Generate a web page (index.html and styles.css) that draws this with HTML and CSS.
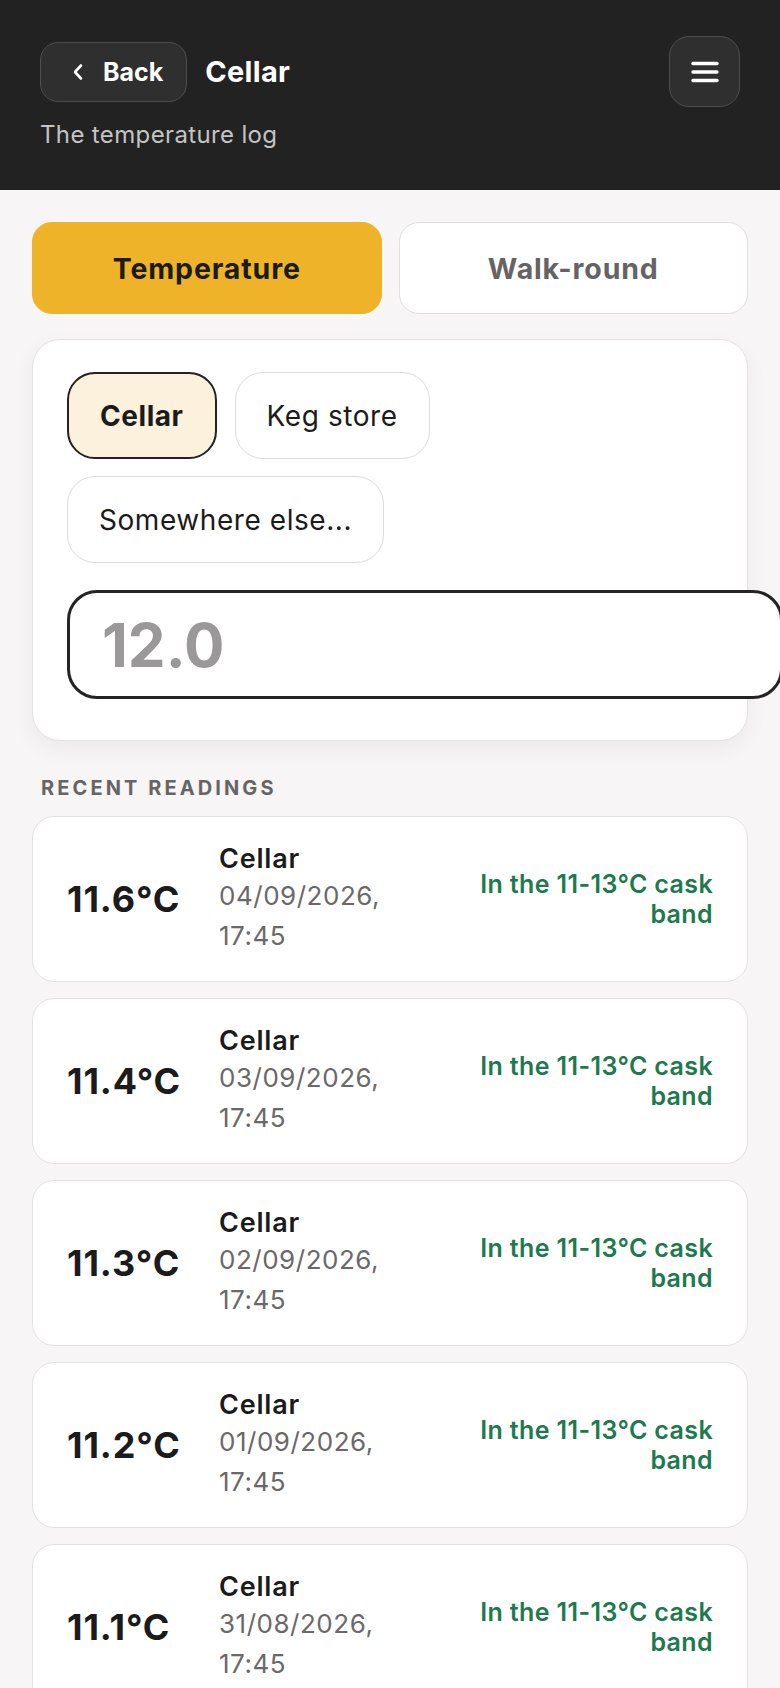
FILE: index.html
```html
<!DOCTYPE html>
<html lang="en">
<head>
<meta charset="utf-8">
<title>Cellar</title>
<link rel="stylesheet" href="styles.css">
</head>
<body>
<header class="topbar">
  <div class="topbar-row">
    <div class="topbar-left">
      <button class="back-btn" type="button">
        <svg class="chev" width="12" height="18" viewBox="0 0 12 18" aria-hidden="true"><path d="M9 2.5 L3 9 L9 15.5" fill="none" stroke="#fff" stroke-width="2.6" stroke-linecap="round" stroke-linejoin="round"/></svg>
        <span>Back</span>
      </button>
      <h1 class="title">Cellar</h1>
    </div>
    <button class="menu-btn" type="button" aria-label="Menu">
      <svg width="28" height="22" viewBox="0 0 28 22" aria-hidden="true"><g stroke="#fff" stroke-width="3.4" stroke-linecap="round"><line x1="2" y1="2.5" x2="26" y2="2.5"/><line x1="2" y1="11" x2="26" y2="11"/><line x1="2" y1="19.5" x2="26" y2="19.5"/></g></svg>
    </button>
  </div>
  <p class="subtitle">The temperature log</p>
</header>

<main class="content">
  <div class="tabs">
    <button class="tab tab-active" type="button">Temperature</button>
    <button class="tab" type="button">Walk-round</button>
  </div>

  <section class="entry-card">
    <div class="chips">
      <button class="chip chip-selected" type="button">Cellar</button>
      <button class="chip" type="button">Keg store</button>
      <button class="chip" type="button">Somewhere else...</button>
    </div>
    <input class="temp-input" type="text" placeholder="12.0">
  </section>

  <h2 class="section-label">Recent readings</h2>

  <ul class="readings">
    <li class="reading">
      <div class="reading-temp">11.6°C</div>
      <div class="reading-info"><div class="reading-place">Cellar</div><div class="reading-date">04/09/2026, 17:45</div></div>
      <div class="reading-status">In the 11-13°C cask band</div>
    </li>
    <li class="reading">
      <div class="reading-temp">11.4°C</div>
      <div class="reading-info"><div class="reading-place">Cellar</div><div class="reading-date">03/09/2026, 17:45</div></div>
      <div class="reading-status">In the 11-13°C cask band</div>
    </li>
    <li class="reading">
      <div class="reading-temp">11.3°C</div>
      <div class="reading-info"><div class="reading-place">Cellar</div><div class="reading-date">02/09/2026, 17:45</div></div>
      <div class="reading-status">In the 11-13°C cask band</div>
    </li>
    <li class="reading">
      <div class="reading-temp">11.2°C</div>
      <div class="reading-info"><div class="reading-place">Cellar</div><div class="reading-date">01/09/2026, 17:45</div></div>
      <div class="reading-status">In the 11-13°C cask band</div>
    </li>
    <li class="reading">
      <div class="reading-temp">11.1°C</div>
      <div class="reading-info"><div class="reading-place">Cellar</div><div class="reading-date">31/08/2026, 17:45</div></div>
      <div class="reading-status">In the 11-13°C cask band</div>
    </li>
  </ul>
</main>
</body>
</html>
```

FILE: styles.css
```css
* { box-sizing: border-box; }

html, body {
  margin: 0;
  padding: 0;
}

body {
  background: #f7f5f5;
  font-family: Inter, "Noto Sans", "Liberation Sans", sans-serif;
  color: #1b1b1b;
}

button {
  font-family: inherit;
  cursor: pointer;
}

.topbar {
  background: #222222;
  padding: 36px 40px 40px;
  height: 190px;
}

.topbar-row {
  display: flex;
  align-items: center;
  justify-content: space-between;
}

.topbar-left {
  display: flex;
  align-items: center;
  gap: 18px;
}

.back-btn {
  display: flex;
  align-items: center;
  gap: 19px;
  height: 60px;
  padding: 0 23px 0 31px;
  background: #2f2f2f;
  border: 1.5px solid #4e4e4e;
  border-radius: 18px;
  color: #fff;
  font-size: 25px;
  font-weight: 700;
}

.title {
  margin: 0;
  color: #fff;
  font-size: 29px;
  font-weight: 700;
  letter-spacing: 0.01em;
}

.menu-btn {
  width: 71px;
  height: 71px;
  display: flex;
  align-items: center;
  justify-content: center;
  background: #2f2f2f;
  border: 1.5px solid #4e4e4e;
  border-radius: 20px;
  padding: 0;
}

.subtitle {
  margin: 12px 0 0;
  color: #c4c4c4;
  font-size: 24px;
  line-height: 31px;
  letter-spacing: 0.015em;
}

.content {
  padding: 32px 32px 40px;
}

.tabs {
  display: grid;
  grid-template-columns: 1fr 1fr;
  gap: 17px;
}

.tab {
  height: 92px;
  border-radius: 20px;
  border: 1.5px solid #e0dede;
  background: #fff;
  color: #666364;
  font-size: 28.5px;
  font-weight: 700;
  letter-spacing: 0.03em;
}

.tab-active {
  background: #efb32a;
  border-color: #efb32a;
  color: #1b1b1b;
}

.entry-card {
  margin-top: 25px;
  background: #fff;
  border: 1.5px solid #e3e1e1;
  border-radius: 28px;
  padding: 32px 34px 41px;
  box-shadow: 0 8px 22px rgba(0, 0, 0, 0.05);
}

.chips {
  display: flex;
  flex-wrap: wrap;
  gap: 17px 18px;
}

.chip {
  height: 87px;
  padding: 0 31px;
  border-radius: 28px;
  border: 1.5px solid #dedcdc;
  background: #fff;
  color: #1b1b1b;
  font-size: 28px;
  font-weight: 400;
  letter-spacing: 0.02em;
}

.chip-selected {
  background: #fcf1dc;
  border: 2px solid #222;
  font-weight: 700;
}

.temp-input {
  display: block;
  box-sizing: content-box;
  width: 100%;
  margin-top: 27px;
  height: 103px;
  padding: 0 32px;
  border: 3px solid #242424;
  border-radius: 30px;
  background: #fff;
  font-family: inherit;
  font-size: 60px;
  font-weight: 700;
  color: #1b1b1b;
  outline: none;
}

.temp-input::placeholder {
  color: #9b9899;
}

.section-label {
  margin: 35px 0 0 9px;
  font-size: 20px;
  line-height: 24px;
  font-weight: 700;
  letter-spacing: 0.155em;
  text-transform: uppercase;
  color: #676465;
}

.readings {
  list-style: none;
  margin: 16px 0 0;
  padding: 0;
  display: flex;
  flex-direction: column;
  gap: 16px;
}

.reading {
  display: grid;
  grid-template-columns: 120px 200px 1fr;
  column-gap: 32px;
  align-items: center;
  background: #fff;
  border: 1.5px solid #e3e1e1;
  border-radius: 22px;
  padding: 25px 34px;
}

.reading-temp {
  font-size: 36px;
  font-weight: 700;
  letter-spacing: 0.025em;
}

.reading-place {
  font-size: 27px;
  line-height: 34px;
  font-weight: 600;
  letter-spacing: 0.03em;
}

.reading-date {
  font-size: 26px;
  line-height: 40px;
  color: #6b6869;
  letter-spacing: 0.02em;
}

.reading-status {
  text-align: right;
  font-size: 25px;
  line-height: 30px;
  font-weight: 600;
  letter-spacing: 0.015em;
  color: #1e7a4e;
}
```
